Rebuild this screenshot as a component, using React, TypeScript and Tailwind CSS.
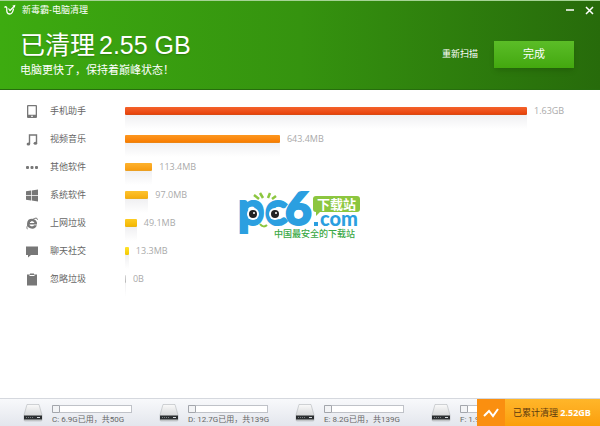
import type { ReactNode } from 'react'

type Row = {
  label: string
  size: string
  mb: number
  bar: string
  icon: ReactNode
}

const TOTAL = 1670

const rows: Row[] = [
  {
    label: '手机助手',
    size: '1.63GB',
    mb: 1670,
    bar: 'from-[#f4622a] to-[#e8430a] border-[#d84a14]',
    icon: (
      <path
        fillRule="evenodd"
        d="M2 0h8a1 1 0 0 1 1 1v11a1 1 0 0 1-1 1H2a1 1 0 0 1-1-1V1a1 1 0 0 1 1-1zM2.3 1.3v8.400h7.400V1.300zM5 10.800v1h2v-1z"
      />
    ),
  },
  {
    label: '视频音乐',
    size: '643.4MB',
    mb: 643.4,
    bar: 'from-[#fd971e] to-[#f87d00] border-[#ec8413]',
    icon: (
      <>
        <path d="M3.500 11V2h7v8" fill="none" stroke="currentColor" strokeWidth="1.400" />
        <ellipse cx="2.400" cy="11" rx="1.800" ry="1.500" />
        <ellipse cx="9.400" cy="10.300" rx="1.800" ry="1.500" />
      </>
    ),
  },
  {
    label: '其他软件',
    size: '113.4MB',
    mb: 113.4,
    bar: 'from-[#fdb22d] to-[#f89d10] border-[#eba024]',
    icon: (
      <>
        <rect x="0" y="5" width="3" height="3" rx="1" />
        <rect x="4.500" y="5" width="3" height="3" rx="1" />
        <rect x="9" y="5" width="3" height="3" rx="1" />
      </>
    ),
  },
  {
    label: '系统软件',
    size: '97.0MB',
    mb: 97,
    bar: 'from-[#fdc32d] to-[#f6ae0c] border-[#ebae20]',
    icon: <path d="M0 2.200 5 1.500V6H0zM5.700 1.400 12 .5V6H5.700zM0 6.800h5v4.700l-5-.7zM5.700 6.800H12v5.700l-6.300-.9z" />,
  },
  {
    label: '上网垃圾',
    size: '49.1MB',
    mb: 49.1,
    bar: 'from-[#fdcc22] to-[#f4b800] border-[#e8b414]',
    icon: (
      <>
        <path
          fillRule="evenodd"
          d="M6 1.800a5 4.900 0 0 1 5 5.700H3.400c.3 2 3.800 2.600 4.600.7h2.800A5 4.900 0 1 1 6 1.800zM3.500 5.900h4.900C8 3.700 4 3.700 3.500 5.900z"
        />
        <path
          d="M1.600 12C-.2 11.500 1.500 7 5.500 3.400 8.500.8 11.600.2 11.400 2.800"
          fill="none"
          stroke="currentColor"
        />
      </>
    ),
  },
  {
    label: '聊天社交',
    size: '13.3MB',
    mb: 16,
    bar: 'from-[#ffe32a] to-[#f6cc00] border-[#ebc814]',
    icon: <path d="M0 1.500h12V10H5l-3 2.500V10H0z" />,
  },
  {
    label: '忽略垃圾',
    size: '0B',
    mb: 4,
    bar: 'from-[#d8d8d8] to-[#b8b8b8] border-[#c8c8c8]',
    icon: <path d="M1 1.500h3V.5h4v1h3v11H1zM3.500 2v1h5V2z" fillRule="evenodd" />,
  },
]

const drives = [
  { name: 'C:', used: '6.9G', total: '50G' },
  { name: 'D:', used: '12.7G', total: '139G' },
  { name: 'E:', used: '8.2G', total: '139G' },
]

function BrandIcon() {
  return (
    <svg className="h-3 w-3 text-white" viewBox="0 0 12 12" fill="none" stroke="currentColor" aria-hidden="true">
      <path d="M.5 3.500C2 2 3 3 2.800 5c-.3 3 .5 5 2.700 5S9 8 9.500 4.500" strokeWidth="1.300" />
      <path d="M4.500 4.500 6 6.500 10.500 2" strokeWidth="1.200" />
      <path d="M8.300 1.700 11.400.8l-.6 3z" fill="currentColor" stroke="none" />
    </svg>
  )
}

function DriveIcon() {
  return (
    <svg className="mb-1 h-[18px] w-5 shrink-0" viewBox="0 0 20 18" aria-hidden="true">
      <defs>
        <linearGradient id="drive" x1="0" y1="0" x2="0" y2="1">
          <stop offset="0" stopColor="#fafafa" />
          <stop offset="1" stopColor="#c6c8ca" />
        </linearGradient>
      </defs>
      <path d="M4 .5h12l3 10.500v5a1 1 0 0 1-1 1H2a1 1 0 0 1-1-1v-5z" fill="url(#drive)" stroke="#b4b7ba" strokeWidth=".6" />
      <path d="M1 11.500h18v4H1z" fill="#2b2e30" />
      <path d="M3 13.500h8" stroke="#7d8285" strokeDasharray="1 1" />
      <path d="M14 13.500h3" stroke="#d5dadd" />
    </svg>
  )
}

function Drive({ name, used, total }: { name: string; used: string; total?: string }) {
  return (
    <div className="flex w-[136px] shrink-0 items-end pl-[23px]">
      <DriveIcon />
      <div className="ml-[9px] whitespace-nowrap">
        <div className="h-2 w-20 border border-[#bfc2c8] bg-white">
          <div className="-ml-px -mt-px h-2 w-2 rounded-[1px] border border-[#a3a6ac] bg-[#f3f4f6]" />
        </div>
        <p className="font-['Roboto','Noto_Sans_CJK_SC',sans-serif] text-[8px] leading-[13px]">
          {name} {used}
          {total && `已用，共${total}`}
        </p>
      </div>
    </div>
  )
}

function SiteLogo() {
  return (
    <svg
      className="pointer-events-none absolute left-[236px] top-24 h-14 w-[130px] overflow-visible"
      viewBox="0 0 130 56"
      role="img"
      aria-label="pc6.com"
    >
      <g className="font-['Lato',sans-serif] font-black" fill="#2b9fe0" stroke="#2b9fe0">
        <text x="2" y="39" fontSize="46" strokeWidth="2">p</text>
        <text x="29" y="39" fontSize="46" strokeWidth="2">c</text>
        <text x="49" y="39" fontSize="46" strokeWidth="2">6</text>
        <text x="84" y="40" fontSize="20" strokeWidth="0">com</text>
      </g>
      <rect x="78" y="36" width="4" height="4" fill="#2b9fe0" />
      <path d="m18 9 5 4M24 7l3 5M34 7l-2 5M40 10l-4 3" fill="none" stroke="#8cc63f" strokeWidth="2.500" />
      <circle cx="17" cy="28" r="6" fill="#fff" />
      <circle cx="39" cy="28" r="6" fill="#fff" />
      <circle cx="17" cy="28" r="4" fill="#222" />
      <circle cx="39" cy="28" r="4" fill="#222" />
      <circle cx="18" cy="27" r="1" fill="#fff" />
      <circle cx="40" cy="27" r="1" fill="#fff" />
      <path d="M24 38c2 3 5 3 7 1" fill="none" stroke="#8cc63f" strokeWidth="2" />
      <path d="M80 10h41a3 3 0 0 1 3 3v10a3 3 0 0 1-3 3H84l-4 4v-4a3 3 0 0 1-3-3V13a3 3 0 0 1 3-3z" fill="#8cc63f" />
      <g className="font-['Noto_Sans_CJK_SC',sans-serif]">
        <text className="font-bold" x="81" y="23" fontSize="13" fill="#fff">下载站</text>
        <text className="font-medium" x="38" y="51" fontSize="9" fill="#39a845">中国最安全的下载站</text>
      </g>
    </svg>
  )
}

export default function App() {
  return (
    <div className="flex min-h-screen flex-col overflow-hidden bg-white font-['Open_Sans','Noto_Sans_CJK_SC',sans-serif] text-[11px] text-[#666]">
      <header className="border-y border-t-[#a5d395] border-b-[#276d0e] bg-linear-to-r from-[#3dab10] via-[#35930f] to-[#276b0b] text-white">
        <div className="flex h-[18px] items-center px-1">
          <BrandIcon />
          <h1 className="flex-1 pl-1.5 text-[9px]">新毒霸-电脑清理</h1>
          <button type="button" aria-label="最小化" className="mr-2 h-3 w-3">
            <svg viewBox="0 0 12 12" stroke="currentColor" strokeWidth="1.500">
              <path d="M2 6h8" />
            </svg>
          </button>
          <button type="button" aria-label="关闭" className="h-3 w-3">
            <svg viewBox="0 0 12 12" stroke="currentColor" strokeWidth="1.500">
              <path d="m2 3 7 7M9 3l-7 7" />
            </svg>
          </button>
        </div>
        <div className="flex h-[70px] items-center pl-5 pr-[26px]">
          <div className="flex-1 whitespace-nowrap">
            <p className="font-['Liberation_Sans','Noto_Sans_CJK_SC',sans-serif] text-[25px] leading-8 text-shadow-sm">
              已清理<span className="pl-1">2.55 GB</span>
            </p>
            <p className="text-[11px] leading-[18px]">电脑更快了，保持着巅峰状态！</p>
          </div>
          <a href="#rescan" className="mr-4 text-[9px]">重新扫描</a>
          <button type="button" className="h-[27px] w-20 bg-linear-to-b from-[#5bbd27] to-[#43a80e] text-[11px] shadow-md">
            完成
          </button>
        </div>
      </header>

      <main className="relative flex-1 pt-[7px]">
        <ul>
          {rows.map((row) => (
            <li key={row.label} className="flex h-7 items-center pl-[26px] pr-[73px]">
              <svg className="h-[13px] w-3 shrink-0 text-[#777]" viewBox="0 0 12 13" fill="currentColor" aria-hidden="true">
                {row.icon}
              </svg>
              <span className="w-[87px] shrink-0 pl-3 text-[9px]">{row.label}</span>
              <div className="flex min-w-0 flex-1 items-center">
                <div className="relative h-2 shrink-0" style={{ width: `${(row.mb / TOTAL) * 100}%` }}>
                  <div className={`h-2 w-full rounded-[1px] border-b bg-linear-to-b ${row.bar}`} />
                  <div className="absolute inset-x-0 top-2 h-3.5 bg-linear-to-b from-[#f0f0f2] to-white" />
                </div>
                <span className="ml-[7px] whitespace-nowrap text-[9px] text-[#aaa]">{row.size}</span>
              </div>
            </li>
          ))}
        </ul>
        <SiteLogo />
      </main>

      <footer className="relative flex h-7 border-t border-[#d5d8de] bg-linear-to-b from-[#f8f9fb] to-[#e3e6ed]">
        {drives.map((drive) => (
          <Drive key={drive.name} {...drive} />
        ))}
        <Drive name="F:" used="1.9G" />
        <div className="absolute inset-y-0 right-0 flex w-[123px] items-center bg-linear-to-b from-[#ffb629] to-[#fb9f08]">
          <div className="flex h-full w-7 items-center justify-center bg-[#fa8f10]">
            <svg className="h-4 w-4 text-white" viewBox="0 0 16 16" fill="none" stroke="currentColor" strokeWidth="2" aria-hidden="true">
              <path d="m1 11 5-5 4 5 5-7" />
            </svg>
          </div>
          <p className="whitespace-nowrap pl-2 text-[9px] text-[#5a3a10]">
            已累计清理 <b className="text-white">2.52GB</b>
          </p>
        </div>
      </footer>
    </div>
  )
}
